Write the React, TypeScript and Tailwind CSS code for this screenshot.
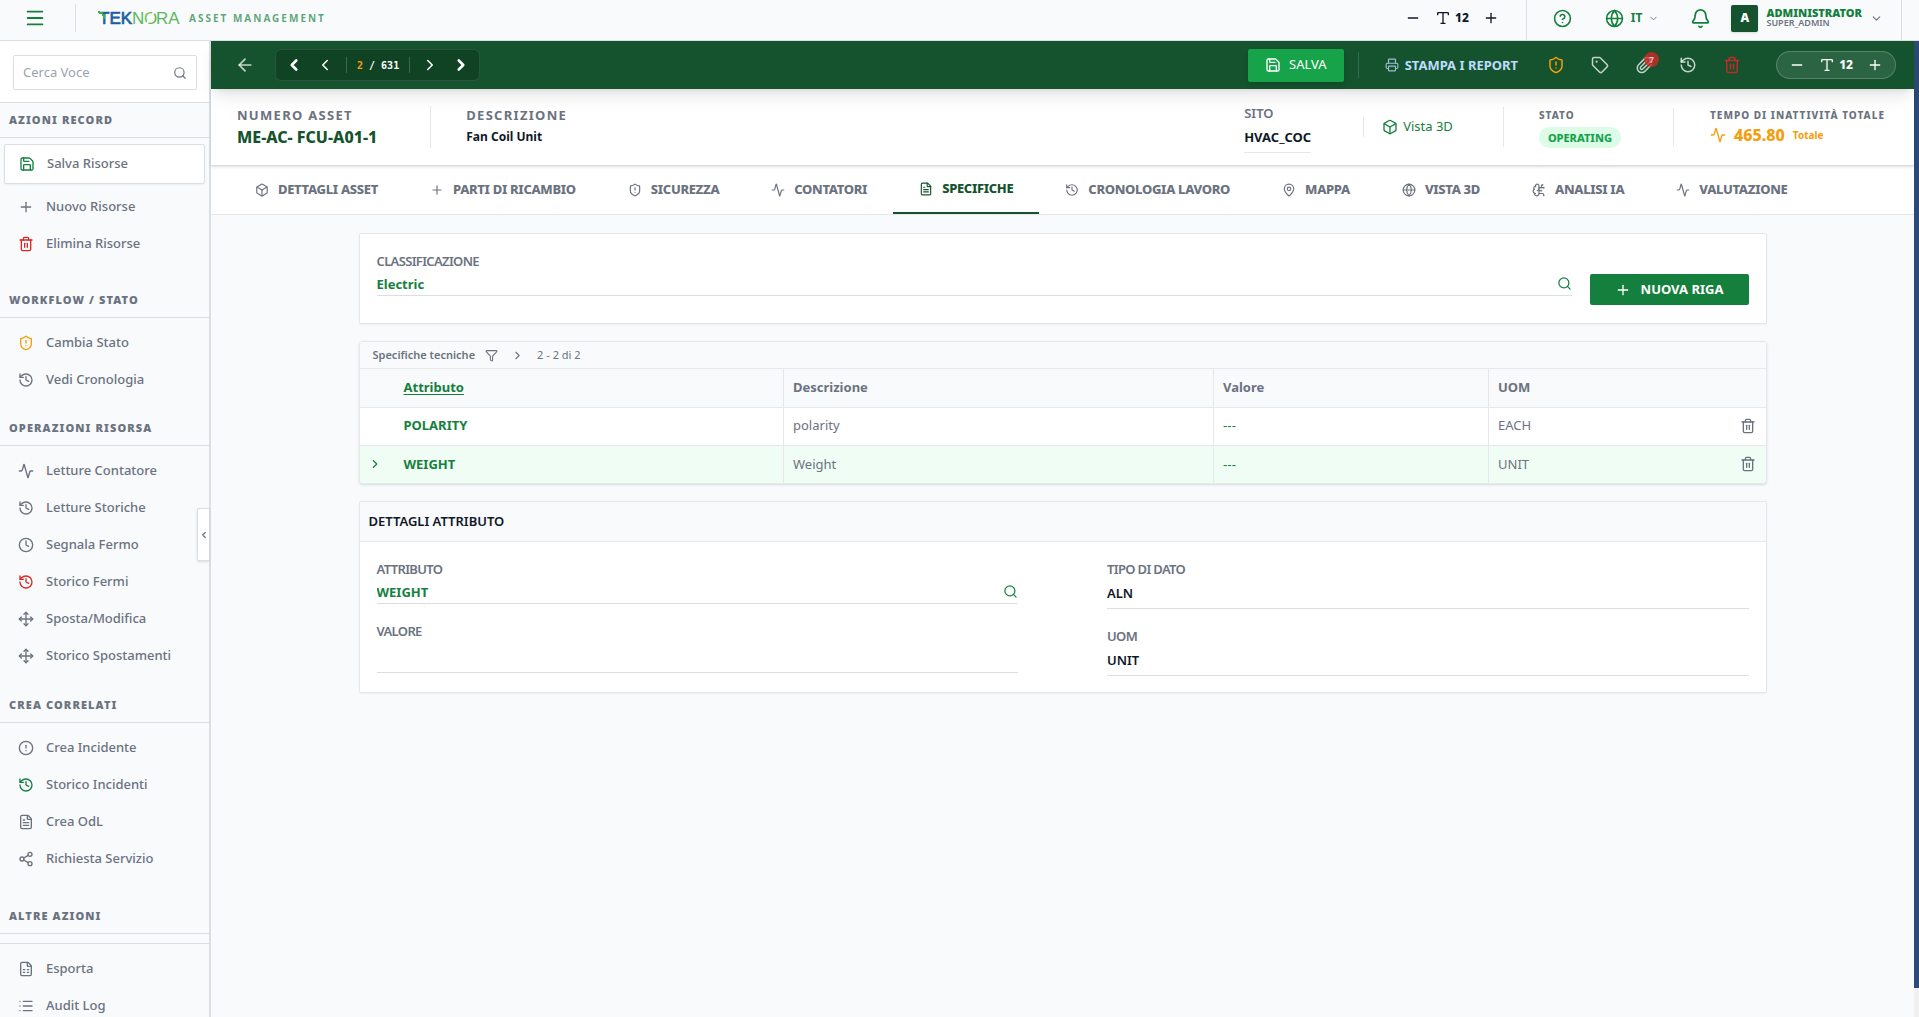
import type { ReactNode } from 'react';
import {
  Activity, ArrowLeft, Bell, Box, BrainCircuit, ChevronDown, ChevronLeft, ChevronRight, CircleAlert,
  CircleQuestionMark, Clock, FileSpreadsheet, FileText, Funnel, Globe, History, List, MapPin, Menu,
  Minus, Move, Paperclip, Plus, Printer, Save, Search, Share2, ShieldAlert, Tag, Trash2, Type,
} from 'lucide-react';
import type { LucideIcon } from 'lucide-react';

type Item = { icon: LucideIcon; label: string; tone?: string; active?: boolean };
type Section = { title: string; items: Item[]; pad: string; ruled?: boolean };

const sections: Section[] = [
  {
    title: 'AZIONI RECORD',
    pad: 'pb-[21px]',
    items: [
      { icon: Save, label: 'Salva Risorse', tone: 'text-[#15803d]', active: true },
      { icon: Plus, label: 'Nuovo Risorse' },
      { icon: Trash2, label: 'Elimina Risorse', tone: 'text-[#dc2626]' },
    ],
  },
  {
    title: 'WORKFLOW / STATO',
    pad: 'pb-[13px]',
    items: [
      { icon: ShieldAlert, label: 'Cambia Stato', tone: 'text-[#f59e0b]' },
      { icon: History, label: 'Vedi Cronologia' },
    ],
  },
  {
    title: 'OPERAZIONI RISORSA',
    pad: 'pb-3.5',
    items: [
      { icon: Activity, label: 'Letture Contatore' },
      { icon: History, label: 'Letture Storiche' },
      { icon: Clock, label: 'Segnala Fermo' },
      { icon: History, label: 'Storico Fermi', tone: 'text-[#dc2626]' },
      { icon: Move, label: 'Sposta/Modifica' },
      { icon: Move, label: 'Storico Spostamenti' },
    ],
  },
  {
    title: 'CREA CORRELATI',
    pad: 'pb-[22px]',
    items: [
      { icon: CircleAlert, label: 'Crea Incidente' },
      { icon: History, label: 'Storico Incidenti', tone: 'text-[#15803d]' },
      { icon: FileText, label: 'Crea OdL' },
      { icon: Share2, label: 'Richiesta Servizio' },
    ],
  },
  {
    title: 'ALTRE AZIONI',
    pad: 'pb-3.5',
    ruled: true,
    items: [
      { icon: FileSpreadsheet, label: 'Esporta' },
      { icon: List, label: 'Audit Log' },
    ],
  },
];

const tabs: Item[] = [
  { icon: Box, label: 'DETTAGLI ASSET' },
  { icon: Plus, label: 'PARTI DI RICAMBIO' },
  { icon: ShieldAlert, label: 'SICUREZZA' },
  { icon: Activity, label: 'CONTATORI' },
  { icon: FileText, label: 'SPECIFICHE', active: true },
  { icon: History, label: 'CRONOLOGIA LAVORO' },
  { icon: MapPin, label: 'MAPPA' },
  { icon: Globe, label: 'VISTA 3D' },
  { icon: BrainCircuit, label: 'ANALISI IA' },
  { icon: Activity, label: 'VALUTAZIONE' },
];

const rows = [
  { name: 'POLARITY', description: 'polarity', value: '---', uom: 'EACH', selected: false },
  { name: 'WEIGHT', description: 'Weight', value: '---', uom: 'UNIT', selected: true },
];

function Logo() {
  return (
    <svg width="84" height="24" viewBox="0 0 84 24" role="img" aria-label="TEKNORA" className="shrink-0">
      <defs>
        <linearGradient id="ring" x1="0" y1="0" x2="1" y2="1">
          <stop offset="0" stopColor="#8cc63f" />
          <stop offset="1" stopColor="#4caf50" />
        </linearGradient>
      </defs>
      <g fontFamily='"Liberation Sans", Arial, sans-serif' fontSize="17">
        <text x="1" y="18" fill="#1c5fa0" stroke="#1c5fa0" strokeWidth="0.7">TEK</text>
        <text x="34" y="18" fill="#5cb85c">N</text>
        <text x="46" y="18" fill="url(#ring)">O</text>
        <text x="58" y="18" fill="#5cb85c">RA</text>
      </g>
      <path d="M57 4.5 L48 19" stroke="#f8fafc" strokeWidth="2.2" />
      <path d="M0 5h2v2H0zM2 6h3v2H2zM4 8h3v2H4zM5 10h2v3H5z" fill="#3fae49" />
    </svg>
  );
}

function FontSizer() {
  return (
    <div className="flex items-center gap-3.5">
      <button type="button" aria-label="Riduci testo"><Minus size={16} /></button>
      <span className="flex items-center gap-1 text-xs font-extrabold leading-4">
        <Type size={16} />
        12
      </span>
      <button type="button" aria-label="Ingrandisci testo"><Plus size={16} /></button>
    </div>
  );
}

function TopBar() {
  return (
    <header className="flex h-[41px] shrink-0 items-center border-b border-[#dadfe4] bg-[#f8fafc] text-[#15803d]">
      <button type="button" aria-label="Menu" className="ml-6 mr-[29px] mb-1"><Menu size={22} /></button>
      <div className="mb-1 h-7 w-px bg-[#dadfe4]" />
      <div className="mb-1 ml-[22px] flex items-center gap-[7px]">
        <Logo />
        <span className="text-[10px] font-bold leading-4 tracking-[0.2em] text-[#15803d]/70">ASSET MANAGEMENT</span>
      </div>
      <div className="mb-1 ml-auto mr-[27px] text-gray-900">
        <FontSizer />
      </div>
      <div className="flex h-full items-center border-x border-[#dadfe4] pb-1 pl-[26px] pr-[18px]">
        <button type="button" aria-label="Aiuto"><CircleQuestionMark size={19} /></button>
        <button type="button" className="ml-[33px] flex items-center text-xs font-bold leading-4">
          <Globe size={19} />
          <span className="ml-[7px]">IT</span>
          <ChevronDown size={11} className="ml-1.5 text-[#6b7280]" />
        </button>
        <button type="button" aria-label="Notifiche" className="ml-[31px]"><Bell size={21} /></button>
        <button type="button" className="ml-5 flex items-center text-left">
          <span className="flex size-[27px] items-center justify-center rounded-xs bg-[#14532d] text-xs font-black text-white shadow">A</span>
          <span className="ml-2 flex flex-col">
            <span className="text-[11px] font-black leading-[10px]">ADMINISTRATOR</span>
            <span className="text-[9px] font-semibold leading-[10px] text-[#6b7280]">SUPER_ADMIN</span>
          </span>
          <ChevronDown size={13} className="ml-2 text-[#6b7280]" />
        </button>
      </div>
      <div className="w-[17px] shrink-0" />
    </header>
  );
}

function Sidebar() {
  return (
    <aside className="relative w-[211px] shrink-0 border-r-2 border-[#dadfe4] bg-[#f8fafc] text-[#6b7280]">
      <div className="h-full overflow-hidden">
        <div className="border-b border-[#dadfe4] bg-white pb-3 pl-[13px] pr-3 pt-3.5">
          <label className="flex h-[35px] items-center rounded-xs border border-[#dadfe4] px-[9px]">
            <input aria-label="Cerca Voce" placeholder="Cerca Voce" className="min-w-0 flex-1 text-[13px] outline-none placeholder:text-[#9ca3af]" />
            <Search size={14} />
          </label>
        </div>
        {sections.map((s) => (
          <section key={s.title}>
            <h2 className="flex h-[35px] items-center border-b border-[#dadfe4] px-[9px] text-[11px] font-black tracking-[0.1em]">{s.title}</h2>
            {s.ruled && <div className="mt-[9px] border-b border-[#dadfe4]" />}
            <ul className={`pt-1.5 ${s.pad}`}>
              {s.items.map(({ icon: Icon, label, tone = '', active }) => (
                <li key={label} className={active ? 'mb-1 px-1' : ''}>
                  <button
                    type="button"
                    className={
                      active
                        ? 'flex h-10 w-full items-center gap-3 rounded-xs border border-[#dadfe4] bg-white px-3.5 text-[13px] font-medium shadow-xs'
                        : 'flex h-[37px] w-full items-center gap-3 px-[18px] text-[13px] font-medium'
                    }
                  >
                    <Icon size={16} className={tone} />
                    {label}
                  </button>
                </li>
              ))}
            </ul>
          </section>
        ))}
      </div>
      <button
        type="button"
        aria-label="Comprimi menu"
        className="absolute right-0 top-[467px] flex h-[53px] w-3 items-center justify-center rounded-l-xs border border-r-0 border-[#dadfe4] bg-white shadow-sm"
      >
        <ChevronLeft size={10} strokeWidth={3} className="shrink-0" />
      </button>
    </aside>
  );
}

function ActionBar() {
  return (
    <div className="relative z-10 flex h-12 shrink-0 items-center bg-[#14532d] text-white/75 shadow-lg">
      <button type="button" aria-label="Indietro" className="ml-6"><ArrowLeft size={20} /></button>
      <div className="ml-5 flex h-8 items-center rounded-md border border-white/10 bg-black/20 text-white">
        <button type="button" aria-label="Primo" className="ml-[9px]"><ChevronLeft size={18} strokeWidth={3.5} /></button>
        <button type="button" aria-label="Precedente" className="ml-[13px]"><ChevronLeft size={18} /></button>
        <div className="ml-3 flex h-4 items-center whitespace-pre border-x border-white/20 px-2.5 font-['DejaVu_Sans_Mono',monospace] text-[10px] font-bold">
          <span className="text-[#f59e0b]">2</span>
          {' / 631'}
        </div>
        <button type="button" aria-label="Successivo" className="ml-[11px]"><ChevronRight size={18} /></button>
        <button type="button" aria-label="Ultimo" className="ml-[13px] mr-[9px]"><ChevronRight size={18} strokeWidth={3.5} /></button>
      </div>
      <button type="button" className="ml-auto flex h-[33px] items-center gap-2 rounded-xs bg-[#16a34a] px-[17px] text-[13px] text-white shadow-md">
        <Save size={16} />
        SALVA
      </button>
      <div className="ml-3.5 h-[26px] w-px bg-white/15" />
      <button type="button" className="ml-[26px] flex items-center gap-1.5 text-[13px] font-bold leading-4 text-[#bfdbfe]">
        <Printer size={14} className="opacity-80" />
        STAMPA I REPORT
      </button>
      <div className="ml-[29px] flex items-center gap-[26px]">
        <button type="button" aria-label="Stato" className="text-[#f59e0b]"><ShieldAlert size={18} /></button>
        <button type="button" aria-label="Etichetta"><Tag size={18} /></button>
        <button type="button" aria-label="Allegati" className="relative">
          <Paperclip size={18} />
          <span className="absolute -right-1.5 -top-1 flex size-[15px] items-center justify-center rounded-full bg-[#dc2626]/75 text-[8px] font-bold">7</span>
        </button>
        <button type="button" aria-label="Cronologia"><History size={18} /></button>
        <button type="button" aria-label="Elimina" className="text-[#dc2626]/85"><Trash2 size={18} /></button>
      </div>
      <div className="ml-[35px] mr-[18px] flex h-7 items-center rounded-full border border-white/20 bg-white/10 px-3 text-white">
        <FontSizer />
      </div>
    </div>
  );
}

function AssetSummary() {
  return (
    <div className="relative flex h-[77px] shrink-0 items-center border-b border-[#dadfe4] bg-white pl-[26px] pr-[26px] text-[#6b7280] shadow">
      <div>
        <div className="text-[13px] font-bold leading-5 tracking-widest">NUMERO ASSET</div>
        <div className="text-base font-extrabold leading-6 text-[#14532d]">ME-AC- FCU-A01-1</div>
      </div>
      <div className="ml-[53px] h-[42px] w-px bg-gray-200" />
      <div className="ml-[35px]">
        <div className="text-[13px] font-bold leading-5 tracking-widest">DESCRIZIONE</div>
        <div className="text-xs font-bold leading-6 text-gray-900">Fan Coil Unit</div>
      </div>
      <div className="ml-auto pt-1">
        <div className="text-[13px] font-semibold leading-4">SITO</div>
        <div className="mt-[5px] border-b border-gray-200 pb-1 text-[13px] font-bold leading-[22px] text-gray-900">HVAC_COC</div>
      </div>
      <div className="ml-[52px] h-5 w-px bg-gray-200" />
      <a href="#vista-3d" className="ml-[18px] flex items-center gap-[5px] text-[13px] text-[#15803d]">
        <Box size={16} />
        Vista 3D
      </a>
      <div className="ml-[50px] h-10 w-px bg-gray-200" />
      <div className="ml-[35px]">
        <div className="text-[10px] font-extrabold leading-4 tracking-widest">STATO</div>
        <div className="mt-1 rounded-full bg-[#dcfce7] px-[9px] text-[11px] font-extrabold leading-[21px] text-[#16a34a]">OPERATING</div>
      </div>
      <div className="ml-[52px] h-[38px] w-px bg-gray-200" />
      <div className="ml-9 min-w-[178px]">
        <div className="text-[10px] font-extrabold leading-4 tracking-widest">TEMPO DI INATTIVITÀ TOTALE</div>
        <div className="flex items-center leading-6 text-[#f59e0b]">
          <Activity size={16} />
          <span className="ml-2 text-base font-extrabold">465.80</span>
          <span className="ml-2 text-[10px] font-bold">Totale</span>
        </div>
      </div>
    </div>
  );
}

function TabBar() {
  return (
    <nav role="tablist" className="flex h-[49px] shrink-0 border-b border-gray-200 bg-white pl-[18px]">
      {tabs.map(({ icon: Icon, label, active }) => (
        <button
          key={label}
          type="button"
          role="tab"
          aria-selected={!!active}
          className={
            active
              ? 'flex items-center gap-[9px] border-b-2 border-[#14532d] px-[26px] text-[13px] font-extrabold tracking-tight text-[#14532d]'
              : 'flex items-center gap-[9px] px-[26px] text-[13px] font-extrabold tracking-tight text-[#6b7280]'
          }
        >
          <Icon size={14} />
          {label}
        </button>
      ))}
    </nav>
  );
}

function Field({ id, label, value, green, height, children }: {
  id: string; label: string; value: string; green?: boolean; height: string; children?: ReactNode;
}) {
  return (
    <div className="w-full min-w-0">
      <label htmlFor={id} className="block text-[13px] font-semibold leading-5 tracking-tighter text-[#6b7280]">{label}</label>
      <div className={`flex items-center border-b border-[#dadfe4] ${height}`}>
        <input
          id={id}
          defaultValue={value}
          className={green ? 'min-w-0 flex-1 text-[13px] font-bold text-[#15803d] outline-none' : 'min-w-0 flex-1 text-[13px] font-semibold text-gray-900 outline-none'}
        />
        {children}
      </div>
    </div>
  );
}

function SpecTable() {
  return (
    <section className="overflow-hidden rounded-sm border border-gray-200 bg-white text-[13px] text-[#6b7280] shadow">
      <div className="flex h-[27px] items-center border-b border-gray-200 bg-[#f8fafc] px-[13px] text-[11px]">
        <h3 className="font-semibold">Specifiche tecniche</h3>
        <button type="button" aria-label="Filtra" className="ml-2.5"><Funnel size={13} /></button>
        <button type="button" aria-label="Pagina successiva" className="ml-[13px]"><ChevronRight size={13} /></button>
        <span className="ml-[13px]">2 - 2 di 2</span>
      </div>
      <table className="w-full table-fixed border-collapse text-left">
        <colgroup>
          <col className="w-[35px]" />
          <col className="w-[389px]" />
          <col className="w-[430px]" />
          <col className="w-[275px]" />
          <col />
          <col className="w-[38px]" />
        </colgroup>
        <thead>
          <tr className="h-[38px] border-b border-gray-200 bg-[#f8fafc]">
            <th aria-label="Selezione" />
            <th className="pl-[9px] font-bold text-[#15803d]"><button type="button" className="underline underline-offset-2">Attributo</button></th>
            <th className="border-l border-gray-200 pl-[9px] font-bold">Descrizione</th>
            <th className="border-l border-gray-200 pl-[9px] font-bold">Valore</th>
            <th className="border-l border-gray-200 pl-[9px] font-bold">UOM</th>
            <th aria-label="Azioni" />
          </tr>
        </thead>
        <tbody>
          {rows.map((r) => (
            <tr key={r.name} className={r.selected ? 'h-[38px] bg-[#f0fdf4]' : 'h-[38px] border-b border-gray-200'}>
              <td className="pl-2 text-[#15803d]">{r.selected && <ChevronRight size={14} />}</td>
              <td className="pl-[9px] font-bold text-[#15803d]">{r.name}</td>
              <td className="border-l border-gray-200 pl-[9px]">{r.description}</td>
              <td className="border-l border-gray-200 pl-[9px] font-['Liberation_Sans',sans-serif] text-[#15803d]">{r.value}</td>
              <td className="border-l border-gray-200 pl-[9px]">{r.uom}</td>
              <td><button type="button" aria-label={`Elimina ${r.name}`} className="ml-3 block"><Trash2 size={16} /></button></td>
            </tr>
          ))}
        </tbody>
      </table>
    </section>
  );
}

export default function App() {
  return (
    <div className="flex h-screen flex-col overflow-hidden bg-[#f8fafc] font-['Noto_Sans',sans-serif]">
      <TopBar />
      <div className="flex min-h-0 flex-1">
        <Sidebar />
        <div className="flex min-w-0 flex-1 flex-col">
          <ActionBar />
          <AssetSummary />
          <TabBar />
          <main className="mx-auto flex w-full max-w-[1408px] flex-col gap-[17px] pt-[18px]">
            <section className="flex items-start gap-[18px] rounded-xs border border-gray-200 bg-white px-[17px] pb-[18px] pt-[17px] shadow-xs">
              <Field id="classificazione" label="CLASSIFICAZIONE" value="Electric" green height="h-[25px] pt-1">
                <button type="button" aria-label="Cerca classificazione" className="-mt-1 text-[#15803d]"><Search size={15} /></button>
              </Field>
              <button type="button" className="mt-[23px] flex h-[31px] w-[159px] shrink-0 items-center justify-center gap-2.5 rounded-xs bg-[#15803d] text-[13px] font-bold text-white">
                <Plus size={16} />
                NUOVA RIGA
              </button>
            </section>
            <SpecTable />
            <section className="rounded-xs border border-gray-200 bg-white pb-4 shadow-xs">
              <h3 className="flex h-10 items-center border-b border-gray-200 bg-[#f8fafc] px-[9px] text-[13px] font-semibold text-gray-900">DETTAGLI ATTRIBUTO</h3>
              <div className="grid grid-cols-2 gap-x-[89px] px-[17px] pt-[17px]">
                <div className="flex flex-col gap-[17px]">
                  <Field id="attributo" label="ATTRIBUTO" value="WEIGHT" green height="h-[25px] pt-1">
                    <button type="button" aria-label="Cerca attributo" className="-mt-1 text-[#15803d]"><Search size={15} /></button>
                  </Field>
                  <Field id="valore" label="VALORE" value="" height="h-8" />
                </div>
                <div className="flex flex-col gap-[17px]">
                  <Field id="tipo" label="TIPO DI DATO" value="ALN" height="h-[30px]" />
                  <Field id="uom" label="UOM" value="UNIT" height="h-[30px]" />
                </div>
              </div>
            </section>
          </main>
        </div>
        <div className="w-[5px] shrink-0 bg-[#f1f1f1]">
          <div className="h-[97%] bg-[#2c4a75]" />
        </div>
      </div>
    </div>
  );
}
